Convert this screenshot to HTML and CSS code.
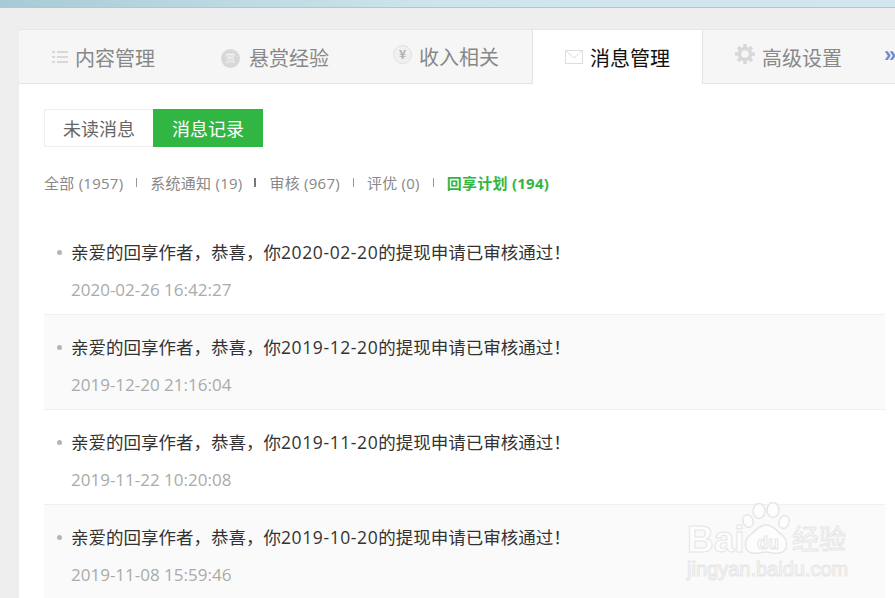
FILE: index.html
```html
<!DOCTYPE html>
<html lang="zh">
<head>
<meta charset="utf-8">
<title>消息管理</title>
<link rel="stylesheet" href="styles.css">
</head>
<body>
<div class="topband"></div>
<main class="card">
  <nav class="tabs">
    <a class="tab tab-1">
      <svg class="ico" width="16" height="14" viewBox="0 0 16 14"><g fill="#d8d8d8"><rect x="0" y="1" width="3" height="2"/><rect x="0" y="6" width="3" height="2"/><rect x="0" y="11" width="3" height="2"/><rect x="5" y="1" width="11" height="2"/><rect x="5" y="6" width="11" height="2"/><rect x="5" y="11" width="11" height="2"/></g></svg>
      <span>内容管理</span>
    </a>
    <a class="tab tab-2">
      <span class="coin coin-dark">赏</span>
      <span>悬赏经验</span>
    </a>
    <a class="tab tab-3">
      <span class="coin coin-light">¥</span>
      <span class="raised">收入相关</span>
    </a>
    <a class="tab tab-4 active">
      <svg class="ico" width="18" height="14" viewBox="0 0 18 14"><rect x=".5" y=".5" width="17" height="13" fill="none" stroke="#ddd"/><path d="M.5.5 9 8l8.500-7.500" fill="none" stroke="#ddd"/></svg>
      <span>消息管理</span>
    </a>
    <a class="tab tab-5">
      <svg class="ico" width="20" height="20" viewBox="0 0 20 20"><circle cx="10" cy="10" r="5.500" fill="none" stroke="#d8d8d8" stroke-width="3.500"/><g stroke="#d8d8d8" stroke-width="3.500"><path d="M10 0v4M10 16v4M0 10h4M16 10h4M3 3l2.800 2.800M14.200 14.200 17 17M17 3l-2.800 2.800M5.800 14.200 3 17"/></g></svg>
      <span>高级设置</span>
    </a>
    <a class="more">»</a>
  </nav>

  <section class="content">
    <div class="switch">
      <a class="switch-btn">未读消息</a>
      <a class="switch-btn on">消息记录</a>
    </div>

    <ul class="filters">
      <li>全部 (1957)</li>
      <li>系统通知 (19)</li>
      <li>审核 (967)</li>
      <li>评优 (0)</li>
      <li class="current">回享计划 (194)</li>
    </ul>

    <ul class="messages">
      <li class="msg">
        <p class="msg-title">亲爱的回享作者，恭喜，你<span class="num">2020-02-20</span>的提现申请已审核通过！</p>
        <p class="msg-time">2020-02-26 16:42:27</p>
      </li>
      <li class="msg">
        <p class="msg-title">亲爱的回享作者，恭喜，你<span class="num">2019-12-20</span>的提现申请已审核通过！</p>
        <p class="msg-time">2019-12-20 21:16:04</p>
      </li>
      <li class="msg">
        <p class="msg-title">亲爱的回享作者，恭喜，你<span class="num">2019-11-20</span>的提现申请已审核通过！</p>
        <p class="msg-time">2019-11-22 10:20:08</p>
      </li>
      <li class="msg">
        <p class="msg-title">亲爱的回享作者，恭喜，你<span class="num">2019-10-20</span>的提现申请已审核通过！</p>
        <p class="msg-time">2019-11-08 15:59:46</p>
      </li>
    </ul>
  </section>
</main>

<div class="watermark">
  <svg class="paw" width="56" height="58" viewBox="0 0 56 58"><g fill="#fdfdfd" stroke="#e6e6e6" stroke-width="1.500"><ellipse cx="17" cy="9" rx="6" ry="7.500"/><ellipse cx="31" cy="8" rx="6" ry="7.500"/><ellipse cx="6" cy="19" rx="5" ry="6.500" transform="rotate(-20 6 19)"/><ellipse cx="42" cy="20" rx="5" ry="6.500" transform="rotate(20 42 20)"/><path d="M24 23c-8 0-10 6-16 10-6 5-7 17 3 18 5 1 8-1 13-1s8 2 13 1c10-1 9-13 3-18-6-4-8-10-16-10Z"/></g></svg>
  <span class="wm-bai">Bai</span>
  <span class="wm-du">du</span>
  <span class="wm-jy">经验</span>
  <span class="wm-url">jingyan.baidu.com</span>
</div>
</body>
</html>
```

FILE: styles.css
```css
* { box-sizing: border-box; }
html, body { margin: 0; padding: 0; }
body {
  width: 895px;
  height: 598px;
  overflow: hidden;
  position: relative;
  background: #eeeeee;
  font-family: "Noto Sans CJK SC", "Liberation Sans", sans-serif;
}
ul { list-style: none; margin: 0; padding: 0; }
p { margin: 0; }

.topband {
  height: 8px;
  background: linear-gradient(90deg, #a7cbd6 0%, #bcd9e2 25%, #cfe5ec 50%, #d2e6ed 100%);
  border-bottom: 1px solid #a9c9d4;
}
.card {
  margin: 21px 0 0 19px;
  width: 876px;
  height: 569px;
  background: #fff;
  border-top: 1px solid #e6e6e6;
}

/* tabs */
.tabs {
  display: flex;
  height: 54px;
  background: #f6f6f6;
  border-bottom: 1px solid #e3e3e3;
}
.tab {
  width: 170px;
  flex: none;
  height: 54px;
  display: flex;
  align-items: center;
  color: #888;
  font-size: 20px;
  line-height: 28px;
}
.tab span { position: relative; top: 1px; }
.tab-1 { width: 173px; padding-left: 33px; gap: 7px; }
.tab-2 { padding-left: 29px; gap: 9px; }
.tab-3 { padding-left: 31px; gap: 7px; }
.tab-4 { padding-left: 33px; gap: 7px; }
.tab-5 { width: 170px; padding-left: 32px; gap: 7px; }
.ico { flex: none; }
.tab .raised { top: 0; }
.tab.active {
  width: 171px;
  height: 54px;
  background: #fff;
  color: #111;
  border-left: 1px solid #e3e3e3;
  border-right: 1px solid #e3e3e3;
  padding-left: 32px;
}
.tab .coin {
  flex: none;
  width: 19px;
  height: 19px;
  border-radius: 50%;
  display: flex;
  align-items: center;
  justify-content: center;
  font-size: 10px;
  line-height: 1;
}
.coin-dark { background: #d8d8d8; color: #f7f7f7; }
.tab .coin-light {
  top: -3px;
  background: #f0f0f0;
  border: 1px solid #e0e0e0;
  color: #b0b0b0;
  font-weight: 700;
  font-size: 12px;
}
.tab-5 .ico { position: relative; top: -3px; }
.more {
  margin-left: 11px;
  color: #6c8ccb;
  font-size: 22px;
  line-height: 50px;
  font-family: "Liberation Sans", sans-serif;
  font-weight: 700;
}

/* content */
.content { padding: 25px 10px 0 25px; }
.switch { display: flex; height: 38px; }
.switch-btn {
  width: 109px;
  height: 38px;
  border: 1px solid #eeeeee;
  border-right: 0;
  color: #666;
  font-size: 18px;
  line-height: 36px;
  text-align: center;
}
.switch-btn.on {
  width: 110px;
  background: #32b643;
  border: 0;
  color: #fff;
  line-height: 38px;
}
.filters {
  display: flex;
  align-items: center;
  margin-top: 24px;
  height: 22px;
  font-family: "Open Sans", "Noto Sans CJK SC", sans-serif;
  font-size: 15px;
  letter-spacing: .25px;
  color: #888;
}
.filters li { display: flex; align-items: center; white-space: nowrap; }
.filters li:not(:last-child)::after {
  content: "";
  width: 1px;
  height: 9px;
  margin: 0 13px;
  background: #999;
}
.filters li:nth-child(2)::after { width: 2px; background: #777; margin: 0 13px 0 12px; }
.filters .current { color: #32b643; font-weight: 700; }

/* messages */
.messages { margin-top: 27px; }
.msg {
  position: relative;
  height: 95px;
  padding: 19px 0 0 27px;
  border-bottom: 1px solid #f0f0f0;
}
.msg:nth-child(even) { background: #fafafa; }
.msg::before {
  content: "";
  position: absolute;
  left: 13px;
  top: 30px;
  width: 5px;
  height: 5px;
  border-radius: 50%;
  background: #b5b5b5;
}
.msg-title {
  font-family: "Noto Sans CJK SC", sans-serif;
  font-size: 17.500px;
  line-height: 26px;
  color: #333;
  white-space: nowrap;
}
.num { font-family: "Open Sans", sans-serif; letter-spacing: .6px; }
.msg-time {
  margin-top: 13px;
  font-family: "Open Sans", sans-serif;
  font-size: 17px;
  line-height: 24px;
  color: #aaa;
}

/* watermark */
.watermark {
  position: absolute;
  left: 685px;
  top: 500px;
  width: 170px;
  height: 90px;
  font-family: "Liberation Sans", sans-serif;
  color: #fdfdfd;
  -webkit-text-stroke: 1px #e6e6e6;
}
.paw { position: absolute; left: 57px; top: 2px; }
.wm-bai { position: absolute; left: 2px; top: 20px; font-size: 37px; line-height: 40px; font-weight: 700; }
.wm-du { position: absolute; left: 72px; top: 33px; font-size: 18px; line-height: 20px; font-weight: 700; }
.wm-jy { position: absolute; left: 107px; top: 20px; font-size: 27px; line-height: 36px; font-family: "Noto Sans CJK SC", sans-serif; }
.wm-url { position: absolute; left: 2px; top: 58px; font-size: 20px; line-height: 22px; }
```
